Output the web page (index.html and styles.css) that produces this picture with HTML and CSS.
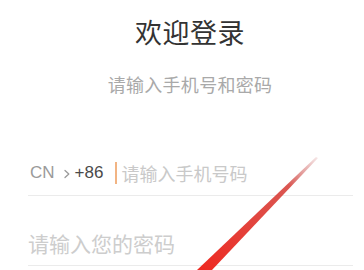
FILE: index.html
```html
<!DOCTYPE html>
<html lang="zh-CN">
<head>
<meta charset="utf-8">
<title>欢迎登录</title>
<link rel="stylesheet" href="styles.css">
</head>
<body>
<main class="page">
  <header class="head">
    <h1 class="title">欢迎登录</h1>
    <p class="sub">请输入手机号和密码</p>
  </header>
  <form class="form">
    <div class="field phone">
      <span class="cc">CN</span>
      <svg class="chev" width="6" height="10" viewBox="0 0 6 10"><path d="M1 1.5 L4.8 5 L1 8.5" fill="none" stroke="#9a9a9a" stroke-width="1.3" stroke-linecap="round" stroke-linejoin="round"/></svg>
      <span class="code">+86</span>
      <span class="caret"></span>
      <span class="ph">请输入手机号码</span>
    </div>
    <div class="field pwd">
      <span class="ph ph-lg">请输入您的密码</span>
    </div>
  </form>
  <svg class="annot" width="364" height="270" viewBox="0 0 364 270">
    <defs>
      <linearGradient id="g" gradientUnits="userSpaceOnUse" x1="317" y1="157" x2="205" y2="270">
        <stop offset="0" stop-color="#c25a5a" stop-opacity="0.15"/>
        <stop offset="0.25" stop-color="#d43a34" stop-opacity="0.85"/>
        <stop offset="1" stop-color="#ee2a22" stop-opacity="1"/>
      </linearGradient>
    </defs>
    <polygon points="316,157 318,158 212,270 197,270" fill="url(#g)"/>
  </svg>
</main>
</body>
</html>
```

FILE: styles.css
```css
html, body {
  margin: 0;
  padding: 0;
  background: #ffffff;
}
.page {
  position: relative;
  width: 364px;
  height: 270px;
  overflow: hidden;
  font-family: "Noto Sans CJK SC", "Noto Sans", sans-serif;
}
.head {
  display: flex;
  flex-direction: column;
  align-items: center;
  padding-left: 16px;
}
.title {
  margin: 18px 0 0;
  font-size: 27px;
  line-height: 27px;
  font-weight: 400;
  color: #333333;
  letter-spacing: 0.5px;
}
.sub {
  margin: 30px 0 0;
  font-size: 18px;
  line-height: 18px;
  color: #a9a9a9;
  letter-spacing: 0.3px;
}
.form {
  display: flex;
  flex-direction: column;
  margin: 58px 11px 0 28px;
}
.field {
  display: flex;
  align-items: center;
  height: 44px;
  border-bottom: 1px solid #ebebeb;
  padding-left: 2px;
}
.pwd {
  margin-top: 25px;
  padding-left: 0;
}
.cc {
  font-family: "Liberation Sans", Arial, sans-serif;
  font-size: 17px;
  color: #9a9a9a;
}
.chev {
  margin-left: 9px;
  margin-top: 1px;
}
.code {
  margin-left: 5px;
  font-family: "Liberation Sans", Arial, sans-serif;
  font-size: 17px;
  color: #4a4a4a;
}
.caret {
  width: 2px;
  height: 22px;
  margin-left: 12px;
  background: #f2b483;
}
.ph {
  margin-left: 4px;
  font-size: 18px;
  line-height: 18px;
  color: #c9c9c9;
}
.ph-lg {
  margin-left: 0;
  font-size: 21px;
  line-height: 21px;
  color: #cdcdcd;
}
.annot {
  position: absolute;
  left: 0;
  top: 0;
  pointer-events: none;
}
```
